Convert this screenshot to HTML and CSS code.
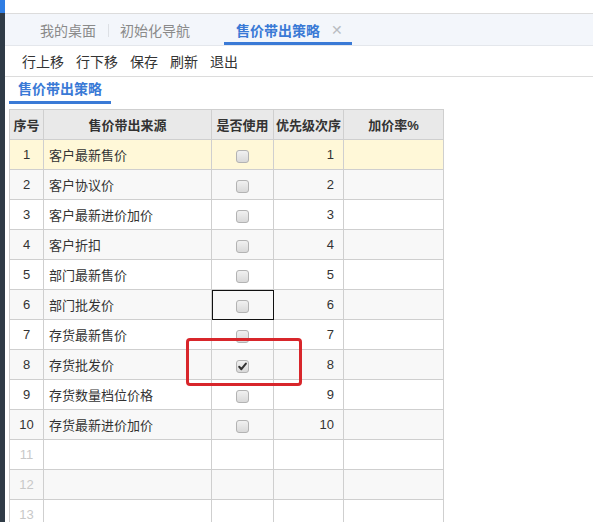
FILE: index.html
```html
<!DOCTYPE html>
<html lang="zh-CN">
<head>
<meta charset="utf-8">
<title>售价带出策略</title>
<link rel="stylesheet" href="styles.css">
</head>
<body>
<div class="app">
  <div class="sidebar"><div class="sidebar-top"></div></div>
  <div class="main">
    <div class="topstrip"></div>
    <div class="tabbar">
      <div class="tab tab-first">我的桌面</div>
      <div class="tab tab-second">初始化导航</div>
      <div class="tab tab-active">售价带出策略<span class="close">✕</span></div>
    </div>
    <div class="toolbar">
      <span class="tool">行上移</span>
      <span class="tool">行下移</span>
      <span class="tool">保存</span>
      <span class="tool">刷新</span>
      <span class="tool">退出</span>
    </div>
    <div class="subtabs">
      <div class="subtab">售价带出策略</div>
    </div>
    <div class="grid-wrap">
      <table class="grid">
        <colgroup>
          <col class="c-no"><col class="c-src"><col class="c-use"><col class="c-pri"><col class="c-rate">
        </colgroup>
        <thead>
          <tr><th>序号</th><th>售价带出来源</th><th>是否使用</th><th>优先级次序</th><th>加价率%</th></tr>
        </thead>
        <tbody>
          <tr class="sel"><td class="no">1</td><td class="src">客户最新售价</td><td class="use"><span class="cb"></span></td><td class="pri">1</td><td></td></tr>
          <tr class="alt"><td class="no">2</td><td class="src">客户协议价</td><td class="use"><span class="cb"></span></td><td class="pri">2</td><td></td></tr>
          <tr><td class="no">3</td><td class="src">客户最新进价加价</td><td class="use"><span class="cb"></span></td><td class="pri">3</td><td></td></tr>
          <tr class="alt"><td class="no">4</td><td class="src">客户折扣</td><td class="use"><span class="cb"></span></td><td class="pri">4</td><td></td></tr>
          <tr><td class="no">5</td><td class="src">部门最新售价</td><td class="use"><span class="cb"></span></td><td class="pri">5</td><td></td></tr>
          <tr class="alt"><td class="no">6</td><td class="src">部门批发价</td><td class="use focus"><span class="cb"></span></td><td class="pri">6</td><td></td></tr>
          <tr><td class="no">7</td><td class="src">存货最新售价</td><td class="use"><span class="cb"></span></td><td class="pri">7</td><td></td></tr>
          <tr class="alt"><td class="no">8</td><td class="src">存货批发价</td><td class="use"><span class="cb checked"><svg viewBox="0 0 13 13" width="13" height="13"><path d="M3.2 6.8 L5.4 9.2 L9.9 3.6" fill="none" stroke="#333" stroke-width="2" stroke-linecap="round" stroke-linejoin="round"/></svg></span></td><td class="pri">8</td><td></td></tr>
          <tr><td class="no">9</td><td class="src">存货数量档位价格</td><td class="use"><span class="cb"></span></td><td class="pri">9</td><td></td></tr>
          <tr class="alt"><td class="no">10</td><td class="src">存货最新进价加价</td><td class="use"><span class="cb"></span></td><td class="pri">10</td><td></td></tr>
          <tr><td class="no empty">11</td><td></td><td></td><td></td><td></td></tr>
          <tr class="alt"><td class="no empty">12</td><td></td><td></td><td></td><td></td></tr>
          <tr><td class="no empty">13</td><td></td><td></td><td></td><td></td></tr>
        </tbody>
      </table>
      <div class="annot"></div>
    </div>
  </div>
</div>
</body>
</html>
```
FILE: styles.css
```css
html, body {
  margin: 0;
  padding: 0;
  background: #fff;
  overflow: hidden;
}
body {
  font-family: "Liberation Sans", "Noto Sans CJK SC", sans-serif;
  color: #333;
}
.app {
  display: flex;
  width: 593px;
  height: 522px;
  overflow: hidden;
}
.sidebar {
  width: 5px;
  flex: none;
  background: #2f3b47;
}
.sidebar-top {
  height: 13px;
  background: #2f7de3;
}
.main {
  flex: 1;
  display: flex;
  flex-direction: column;
  min-width: 0;
}
.topstrip {
  height: 13px;
  border-bottom: 1px solid #dcdcdc;
  flex: none;
}
.tabbar {
  height: 32px;
  flex: none;
  background: #f3f6fb;
  border-bottom: 1px solid #e4e7ec;
  display: flex;
  align-items: stretch;
  font-size: 14px;
  box-sizing: border-box;
}
.tab {
  display: flex;
  align-items: center;
  color: #8a8a8a;
  position: relative;
}
.tab-first {
  margin-left: 23px;
  padding: 0 13px 0 12px;
}
.tab-first::after {
  content: "";
  position: absolute;
  right: 0;
  top: 10px;
  height: 13px;
  border-right: 1px solid #dde0e5;
}
.tab-second {
  padding: 0 34px 0 11px;
}
.tab-active {
  padding: 0 9px 0 12px;
  color: #3a7ad6;
  font-weight: bold;
  border-bottom: 3px solid #3a7ad6;
  padding-top: 3px;
  box-sizing: border-box;
}
.close {
  font-weight: normal;
  color: #b9bcc2;
  font-size: 14px;
  margin-left: 11px;
}
.toolbar {
  height: 30px;
  flex: none;
  border-bottom: 1px solid #dcdcdc;
  display: flex;
  align-items: center;
  padding-left: 17px;
  gap: 12px;
  font-size: 14px;
  color: #333;
}
.subtabs {
  height: 27px;
  flex: none;
  display: flex;
  padding-left: 4px;
}
.subtab {
  width: 102px;
  box-sizing: border-box;
  padding-left: 9px;
  font-size: 14px;
  font-weight: bold;
  color: #3a7ad6;
  border-bottom: 3px solid #3a7ad6;
  line-height: 22px;
  padding-top: 1px;
}
.grid-wrap {
  position: relative;
  margin-top: 5px;
  padding-left: 4px;
}
.grid {
  border-collapse: collapse;
  table-layout: fixed;
  width: 434px;
  font-size: 13px;
}
.c-no { width: 34px; }
.c-src { width: 168px; }
.c-use { width: 62px; }
.c-pri { width: 70px; }
.c-rate { width: 100px; }
.grid th, .grid td {
  border: 1px solid #cfcfcf;
  padding: 0;
  white-space: nowrap;
  overflow: hidden;
}
.grid th {
  height: 29px;
  background: #e9e9e9;
  font-weight: bold;
  color: #333;
  text-align: center;
}
.grid td {
  height: 29px;
  color: #333;
}
.grid tr.alt td { background: #f8f8f8; }
.grid tr.sel td { background: #fff8d8; }
.grid td.no { text-align: center; }
.grid td.no.empty { color: #c8c8c8; }
.grid td.src { padding-left: 5px; }
.grid td.use { text-align: center; }
.grid td.pri { text-align: right; padding-right: 9px; }
.grid td.focus { outline: 1px solid #111; outline-offset: -1px; }
.cb {
  display: inline-block;
  width: 11px;
  height: 11px;
  border: 1px solid #b3b3b3;
  border-radius: 3px;
  background: linear-gradient(#f1f1f1, #d9d9d9);
  vertical-align: middle;
  position: relative;
  top: 1px;
}
.cb svg {
  position: absolute;
  left: -1px;
  top: -1px;
}
.annot {
  position: absolute;
  left: 181px;
  top: 229px;
  width: 110px;
  height: 42px;
  border: 3px solid #d8262b;
  border-radius: 4px;
}
```
